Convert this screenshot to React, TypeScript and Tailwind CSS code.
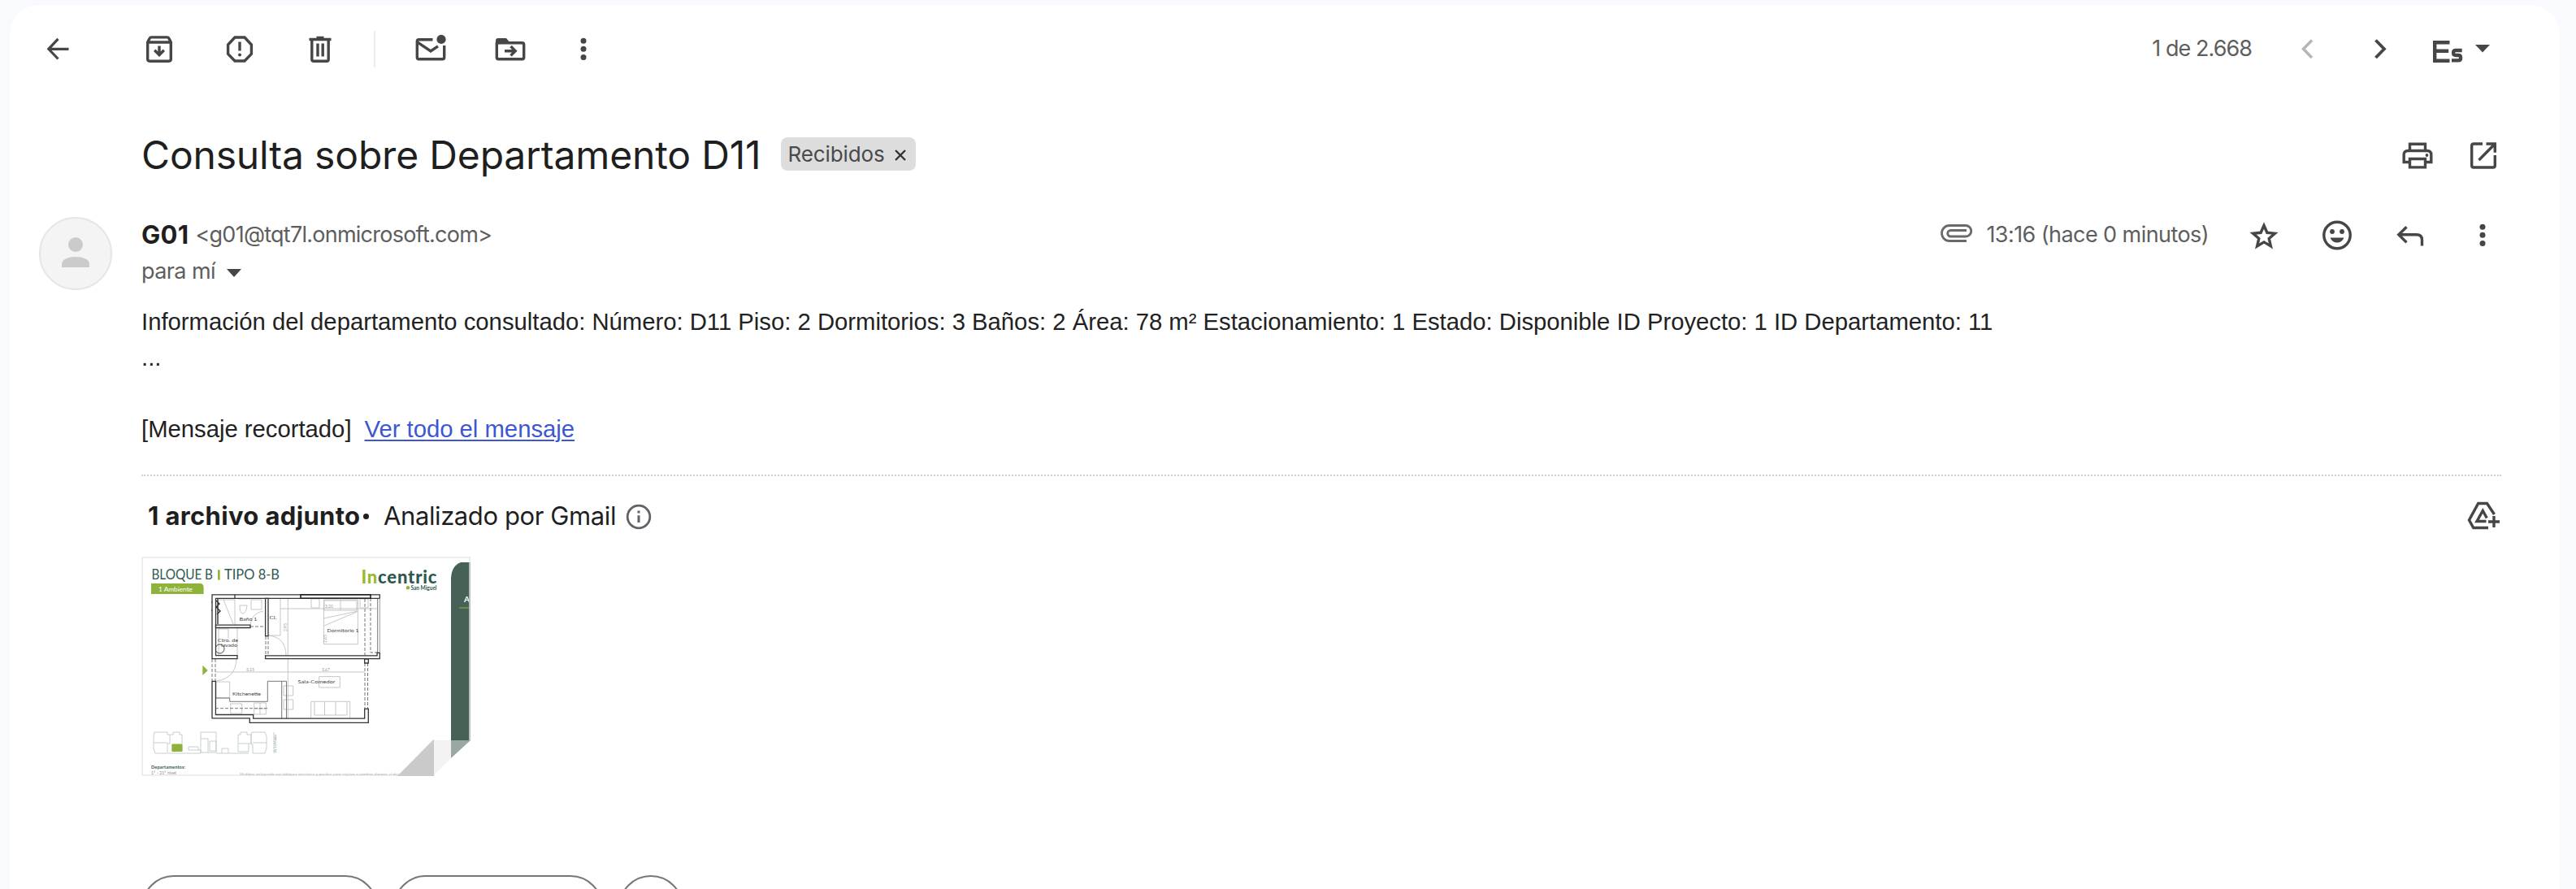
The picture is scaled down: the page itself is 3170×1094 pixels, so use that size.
import type { ReactNode } from "react";

function Icon({ children, className = "" }: { children: ReactNode; className?: string }) {
  return (
    <svg viewBox="0 0 40 40" fill="none" stroke="currentColor" strokeWidth="3.4" className={"size-10 shrink-0 " + className}>
      {children}
    </svg>
  );
}

const Dots = ({ className = "" }: { className?: string }) => (
  <Icon className={className}>
    <g fill="currentColor" stroke="none">
      <circle cx="20" cy="10.2" r="3.5" />
      <circle cx="20" cy="20.2" r="3.5" />
      <circle cx="20" cy="30.4" r="3.5" />
    </g>
  </Icon>
);

function Toolbar() {
  return (
    <div className="flex h-[108px] items-center pl-[39px] pr-[86px]">
      <Icon>
        <path d="M33.500 20.300H9.500M20.500 7.800L8.800 20.300l11.700 12.200" strokeWidth="3.200" />
      </Icon>
      <Icon className="ml-[85px]">
        <path d="M5.700 12v20.800q0 2.400 2.400 2.400h23.800q2.400 0 2.400-2.400V12l-2.400-4.800q-.7-1.300-2-1.300H10.100q-1.300 0-2 1.300zM6 12h28" />
        <path d="M20 16.500v9.500M14.200 21.800l5.800 5.800 5.800-5.800" />
      </Icon>
      <Icon className="ml-[59px]">
        <path d="M14 6h12l8.400 9v11.400L26 35H14l-8.400-8.600V15z" />
        <path d="M20 11.500v11" />
        <circle cx="20" cy="27.400" r="2" fill="currentColor" stroke="none" />
      </Icon>
      <Icon className="ml-[59px]">
        <path d="M6.500 8.500h27M15.500 6.500h9" strokeWidth="3.600" />
        <path d="M9.800 9v24q0 2.200 2.200 2.200h16q2.200 0 2.200-2.200V9M17 13.500v16M23.200 13.500v16" />
      </Icon>
      <div className="ml-[46px] h-[45px] w-0.5 bg-[#ececec]" />
      <Icon className="ml-[48px]">
        <path d="M22.500 8.800H5.500q-2.200 0-2.200 2.200v19.500q0 2.200 2.200 2.200h29q2.200 0 2.200-2.200V16" />
        <path d="M4 12.200L20 23l9-6.200" />
        <circle cx="33" cy="8.400" r="5.600" fill="currentColor" stroke="none" />
      </Icon>
      <Icon className="ml-[58px]">
        <path d="M3.300 12V30.500q0 2.200 2.200 2.200h29q2.200 0 2.200-2.200V15q0-2.200-2.200-2.200H3.300" />
        <path d="M2 14.500V10q0-3 3-3h10l5 6z" fill="currentColor" stroke="none" />
        <path d="M13 22.700h12M20.500 17l5.700 5.700-5.700 5.700" />
      </Icon>
      <Dots className="ml-[50px]" />
      <div className="ml-auto flex items-center">
        <span className="mr-[48px] whitespace-nowrap text-[27px] leading-10 tracking-[-0.95px] text-[#5e5e5e]">1 de 2.668</span>
        <Icon className="text-[#b5b5b5]">
          <path d="M26 9.500L15.500 20.300 26 31" />
        </Icon>
        <Icon className="ml-[50px]">
          <path d="M14.500 9.500L25 20.300 14.500 31" strokeWidth="3.800" />
        </Icon>
        <Icon className="ml-[43px]">
          <path d="M22.500 12.200H4.200v22.600h18.300M4.200 22.800h17" strokeWidth="4.400" />
          <path d="M37.700 22h-7.500q-3 0-3 2.400v1.200q0 2.400 3 2.400h2.800q3 0 3 2.400v1.600q0 2.400-3 2.400h-8" strokeWidth="4.400" />
        </Icon>
        <svg viewBox="0 0 18 10" className="ml-3.5 h-2.5 w-[18px] fill-[#444746]">
          <path d="M0 0h18L9 9.500z" />
        </svg>
      </div>
    </div>
  );
}

function Subject() {
  return (
    <div className="flex h-[153px] items-center pl-[162px] pr-[74px]">
      <h1 className="whitespace-nowrap text-[48px] leading-[60px] tracking-[-0.17px] text-[#1f1f1f]">Consulta sobre Departamento D11</h1>
      <div className="mb-0.5 ml-[25px] flex h-[41px] items-center rounded-lg bg-[#dddddd] pl-2 pr-3 text-[26px] tracking-[-0.1px] text-[#4a4a4a]">
        Recibidos
        <svg viewBox="0 0 14 14" className="ml-3 mt-0.5 size-3.5 stroke-[#333] stroke-[2.4]">
          <path d="M1 1l12 12M13 1L1 13" />
        </svg>
      </div>
      <Icon className="ml-auto">
        <path d="M10.500 14V6.200h19V14M9 28.500H3.200V19.500q0-5 5-5h23.600q5 0 5 5v9H31M10.500 24.500h19v10.400h-19z" />
        <circle cx="31.500" cy="20" r="1.900" fill="currentColor" stroke="none" />
      </Icon>
      <Icon className="ml-[41px]">
        <path d="M19 6H8q-2.300 0-2.300 2.300v24.400Q5.700 35 8 35h24q2.300 0 2.300-2.300V20M23.500 6h10.800v10.800M34 6.300L14.500 26" />
      </Icon>
    </div>
  );
}

function Sender() {
  return (
    <div className="flex h-[107px] pl-9 pr-[72px]">
      <div className="size-[90px] shrink-0 overflow-hidden rounded-full border-2 border-[#e6e6e6] bg-[#f4f4f4]">
        <svg viewBox="0 0 86 86" className="fill-[#cbcbcb]">
          <circle cx="43" cy="32" r="9" />
          <path d="M26 60v-4c0-12 34-12 34 0v4z" />
        </svg>
      </div>
      <div className="ml-9 flex grow flex-col">
        <div className="flex h-11 items-center">
          <span className="whitespace-nowrap text-[31px] font-bold tracking-[0.3px] text-[#1f1f1f]">G01</span>
          <span className="ml-2 whitespace-nowrap text-[27px] tracking-[-0.75px] text-[#5e5e5e]">&lt;g01@tqt7l.onmicrosoft.com&gt;</span>
          <svg viewBox="0 0 39 22" className="mb-1 ml-auto h-[22px] w-[39px] fill-none stroke-[#6a6a6a] stroke-[2.8]">
            <path d="M32 20.500H11a9.500 9.500 0 0 1 0-19h20a6.500 6.500 0 0 1 0 13.500H12.500a3.700 3.700 0 0 1 0-7.500H32" />
          </svg>
          <span className="ml-[17px] whitespace-nowrap text-[27px] tracking-[-0.57px] text-[#5e5e5e]">13:16 (hace 0 minutos)</span>
          <Icon className="ml-[48px]">
            <path d="M20 8.500l3.900 8.800 9.500.9-7.200 6.300 2.200 9.400L20 28.900l-8.400 5 2.200-9.400-7.200-6.300 9.500-.9z" strokeWidth="3.400" />
          </Icon>
          <Icon className="ml-[50px]">
            <circle cx="20" cy="20.500" r="16.200" />
            <path d="M11.500 23.500h17q-2.500 6-8.500 6t-8.500-6z" fill="currentColor" stroke="none" />
            <circle cx="14" cy="16" r="2.900" fill="currentColor" stroke="none" />
            <circle cx="26" cy="16" r="2.900" fill="currentColor" stroke="none" />
          </Icon>
          <Icon className="ml-[50px]">
            <path d="M34.500 33.500v-7q0-6.700-6.700-6.700H6.500M15.500 10.200l-9.700 9.600 9.700 9.600" />
          </Icon>
          <Dots className="ml-[49px] mr-[3px]" />
        </div>
        <div className="mt-px flex h-11 items-center text-[27px] tracking-[-0.6px] text-[#5e5e5e]">
          para mí
          <svg viewBox="0 0 18 10" className="ml-3.5 mt-1 h-2.5 w-[18px] fill-[#444746]">
            <path d="M0 0h18L9 10z" />
          </svg>
        </div>
      </div>
    </div>
  );
}

function FloorPlan() {
  return (
    <svg viewBox="0 0 405 270" className="block h-[270px] w-[405px] font-['Lato',sans-serif]">
      <path d="M1 1H404V226L361 269H1z" fill="#fff" stroke="#eeeeee" strokeWidth="2" />
      <text x="12.500" y="28.300" fontSize="16.500" fill="#2f5950" textLength="75.500" lengthAdjust="spacingAndGlyphs">BLOQUE B</text>
      <rect x="94" y="16.300" width="2.700" height="12.400" fill="#95b534" />
      <text x="102" y="28.300" fontSize="16.500" fill="#2f5950" textLength="68" lengthAdjust="spacingAndGlyphs">TIPO 8-B</text>
      <path d="M12 33H72q4.600 0 4.600 5v8H12z" fill="#8fb23a" />
      <text x="21" y="42.600" fontSize="8" fill="#fff" textLength="42" lengthAdjust="spacingAndGlyphs">1 Ambiente</text>

      <text x="270.500" y="33.300" fontSize="22" fontWeight="900" fill="#2f5950" textLength="93">
        <tspan fill="#9aba2f">In</tspan>centric
      </text>
      <circle cx="328" cy="38.300" r="2.200" fill="#8fb23a" />
      <text x="331.500" y="40.500" fontSize="6.600" fontWeight="700" fill="#2f5950" textLength="32">San Miguel</text>

      {/* cover strip on the right edge */}
      <path d="M381 246V26q1-15 12-19h12v219z" fill="#466156" />
      <text x="397" y="56" fontSize="10" fontWeight="700" fill="#fff">A</text>
      <path d="M391 63h12" stroke="#95b534" />
      <path d="M404 7v219" stroke="#b9c2be" strokeWidth="2" />

      {/* faint fixtures and furniture */}
      <g fill="none" stroke="#b9b9b9" strokeWidth=".8">
        <path d="M95 53h20v31M101 53l12 30M119 52h15M121 60q0 10 4 10t5-10zM135 53h13v12h-13zM134 84q2-15 16-17M95 88v34M118 88v34M95 89h12v12" />
        <path d="M171 51v46H156M171 64h120M180.300 51V204M91 142h184M156 97q22 2 22 25" />
        <path d="M209 52h10v11h-10zM269 52h10v11h-10zM224.400 53h42v54.700h-42zM225 54h40v12h-40zM245 54v12M224.400 76l42-9M225 85l40-17" />
        <path d="M92 153q24-3 25-27M92 154h16.700v20H92zM109.700 181h14v12h-14zM138.700 180h14.600v14h-14.600zM146 180v14M138.700 187h14.600" />
        <path d="M175 159h11.700v12H175zM175 176h11.700v12H175zM218.700 147.600h25.600V161h-25.600z" />
        <path d="M208.700 198v-19.700h48V198M213 179v16h40v-16M225.500 179v16M239 179v16" />
      </g>
      <g fill="none" stroke="#777" strokeWidth="1">
        <path d="M91 174h17.700v4.300h46.600v-25H178M172.700 153.300V199M178.500 153v46M290.700 51v67" />
        <path d="M91 186.700h64M275 52v70M282 51v67h9M134 86h18M153 98v24M156 98v24M87 126v27M91 126v27M275 131v56M278.500 131v56" strokeDasharray="4 2" />
      </g>
      <circle cx="96.500" cy="113.500" r="5.500" fill="none" stroke="#444" />
      <path d="M86 56h3M86 66h3M92 54l4 4-4 4 5 5-4 4M94 52v31" stroke="#333" fill="none" strokeWidth="1.400" />

      {/* walls */}
      <g fill="#fff" stroke="#353535" strokeWidth="1.300">
        <path d="M87 46.800h206.300v4.500H91.500v70.400H118v4H87z" />
        <path d="M91.500 84.200H134v3.300H91.500zM115 46.800v4.500M152.600 51.300H156v46.400h-3.400zM152.600 121.800h137.500v-3.500h3.200v7.400H152.600z" />
        <path d="M87 153.300h4.400V194.500h46.300v4.600h137V187.300h4.600v17H133.300v-5.500H87zM274.700 126h4.600v5h-4.600z" />
      </g>
      <path d="M196 46.800h86v4.500h-86z" fill="none" stroke="#222" strokeWidth="1.600" />
      <path d="M293.300 51v67" stroke="#999" strokeWidth="1" />
      <path d="M75.300 133.700v12.300l6.400-6z" fill="#8fb23a" />

      <g fill="#444" fontSize="6.400">
        <text x="120.500" y="78.500" textLength="22" lengthAdjust="spacingAndGlyphs">Baño 1</text>
        <text x="157.500" y="76.500" textLength="9" lengthAdjust="spacingAndGlyphs">Cl.</text>
        <text x="94" y="104.500" textLength="25" lengthAdjust="spacingAndGlyphs">Ctro. de</text>
        <text x="98" y="110.500" textLength="20" lengthAdjust="spacingAndGlyphs">lavado</text>
        <text x="228.500" y="93" textLength="39" lengthAdjust="spacingAndGlyphs">Dormitorio 1</text>
        <text x="112" y="170.500" textLength="35" lengthAdjust="spacingAndGlyphs">Kitchenette</text>
        <text x="192.500" y="156" textLength="46" lengthAdjust="spacingAndGlyphs">Sala-Comedor</text>
      </g>
      <g fill="#999" fontSize="5">
        <text x="129" y="141">3.15</text>
        <text x="222" y="141">3.67</text>
        <text x="226" y="63">3.20</text>
        <text x="179" y="92" transform="rotate(-90 179 92)">2.95</text>
        <text x="228" y="106" transform="rotate(-90 228 106)">2.65</text>
      </g>

      {/* key plan of the building */}
      <g fill="none" stroke="#bfcac6" strokeWidth=".9">
        <path d="M16 216h16v3h3v11h-3v12H17l-2-6v-14zM15 229h17M36 219h3v-3h8v3h3v11M33 242h40v-4h-15v-4h12v4M73 216h19v25H73zM73 224h9v17M84 227h8v12h-8zM92 242h40M99 242v-6h8v6M119 240v-21h3v-3h8v3h5v11h-15M119 240h13v-10M136 216h16l2 5v14l-2 7h-15v-11h-2v-12zM137 229h17M163 216v26" />
      </g>
      <rect x="37.300" y="230.500" width="13.300" height="9.500" rx="1" fill="#8fb23a" />
      <text x="166" y="241" fontSize="4" fill="#88a098" transform="rotate(-90 166 241)" textLength="22">Av. La Marina</text>
      <text x="12" y="260.500" fontSize="5.600" fontWeight="700" fill="#2f5950" textLength="42">Departamentos:</text>
      <text x="12" y="268" fontSize="5" fill="#80918b" textLength="31">1° - 21° nivel</text>
      <text x="121" y="268.500" fontSize="4.500" fill="#9db0a9" textLength="238">Medidas incluyendo sus tabiques interiores y pueden estar sujetos a cambios durante el desarrollo del proyecto</text>

      {/* folded corner */}
      <path d="M360 226h45v44h-45z" fill="#fff" />
      <path d="M381 226h24l-24 22z" fill="#9ba8a2" />
      <path d="M360 226h21v22l-21 21z" fill="#f3f3f3" />
      <path d="M315 270L360 224.500V270z" fill="#cacaca" />
    </svg>
  );
}

function Attachments() {
  return (
    <section className="flex flex-col border-t-2 border-dotted border-[#d2d2d2]">
      <div className="flex h-[99px] items-center pl-2 text-[31px] text-[#1f1f1f]">
        <span className="w-[261px] whitespace-nowrap font-bold tracking-[0.35px]">1 archivo adjunto</span>
        <span className="ml-1 size-[7px] rounded-full bg-[#1f1f1f]" />
        <span className="ml-[18px] whitespace-nowrap tracking-[-0.4px]">Analizado por Gmail</span>
        <Icon className="ml-2 text-[#5f6368]">
          <circle cx="20" cy="20" r="13.800" strokeWidth="2.800" />
          <path d="M20 18.200v8.800M20 12.500v3" strokeWidth="3" />
        </Icon>
        <Icon className="mb-0.5 ml-auto mr-0.5 text-[#444746]">
          <path d="M26 34.500H7.800L2.500 25 13.700 4.500h10.800L33.500 18M23.500 26.500H12L19.300 13.500l5 9" strokeWidth="3.400" />
          <path d="M33 20v14M26 27h14" strokeWidth="3.400" />
        </Icon>
      </div>
      <FloorPlan />
    </section>
  );
}

export default function App() {
  return (
    <div className="h-[1094px] w-[3170px] overflow-hidden bg-[#f8fafe] pl-3 pt-1.5 font-['Inter',sans-serif] text-[#444746]">
      <main className="h-[1088px] w-[3138px] overflow-hidden rounded-t-[36px] bg-white">
        <Toolbar />
        <Subject />
        <Sender />
        <div className="pl-[162px] pr-[72px]">
          <div className="h-[210px] whitespace-nowrap font-['Liberation_Sans',Arial,sans-serif] text-[29.25px] leading-[44px] text-[#222]">
            <p>Información del departamento consultado: Número: D11 Piso: 2 Dormitorios: 3 Baños: 2 Área: 78 m² Estacionamiento: 1 Estado: Disponible ID Proyecto: 1 ID Departamento: 11</p>
            <p>...</p>
            <p className="mt-11">
              [Mensaje recortado]
              <a href="#" className="ml-4 text-[#3c57d0] underline decoration-2 underline-offset-3">Ver todo el mensaje</a>
            </p>
          </div>
          <Attachments />
          <div className="mt-[122px] flex">
            <div className="h-20 w-[291px] rounded-full border-2 border-[#747775]" />
            <div className="ml-[19px] h-20 w-[258px] rounded-full border-2 border-[#747775]" />
            <div className="ml-[19px] size-20 rounded-full border-2 border-[#747775]" />
          </div>
        </div>
      </main>
    </div>
  );
}
